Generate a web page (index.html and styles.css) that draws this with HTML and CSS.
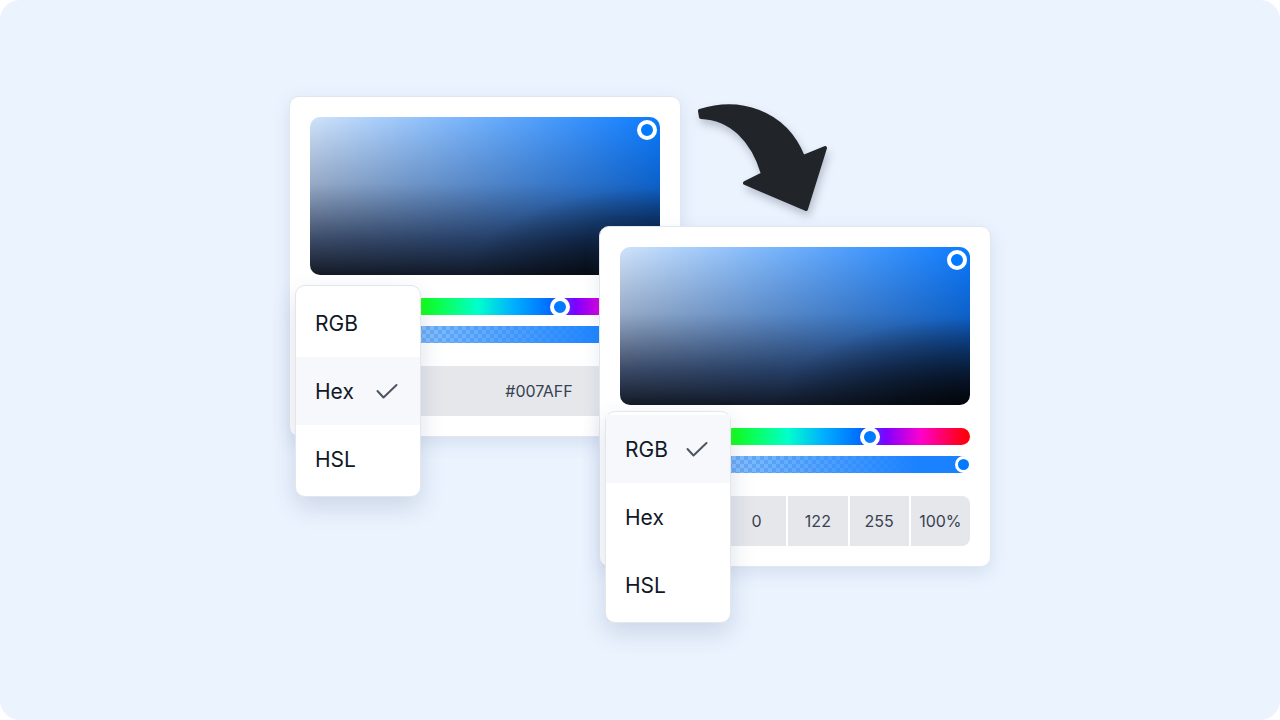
FILE: index.html
```html
<!DOCTYPE html>
<html>
	<head>
		<meta charset="UTF-8">
		<title>Color picker formats</title>
		<link rel="stylesheet" href="styles.css">
	</head>
	<body>
		<div class="canvas">
			<div class="card card-hex">
				<div class="sv"><span class="sv-thumb"></span></div>
				<div class="hue"><span class="hue-thumb"></span></div>
				<div class="alpha"><span class="alpha-thumb"></span></div>
				<div class="fields fields-hex">
					<div class="field format"></div>
					<div class="field">#007AFF</div>
				</div>
				<ul class="menu menu-hex">
					<li>RGB</li>
					<li class="active">Hex
						<svg class="check" width="22" height="22" viewBox="0 0 22 22"><path d="M1.5 10 L7.5 16.5 L20.5 4"/></svg>
					</li>
					<li>HSL</li>
				</ul>
			</div>

			<svg class="arrow" width="150" height="130" viewBox="690 95 150 130">
				<path d="M700 111 C738 99 784 110 803 157 L825 148 L806 209 L745 183 L763 174 C753 140 731 118 701 117 Z"/>
			</svg>

			<div class="card card-rgb">
				<div class="sv"><span class="sv-thumb"></span></div>
				<div class="hue"><span class="hue-thumb"></span></div>
				<div class="alpha"><span class="alpha-thumb"></span></div>
				<div class="fields fields-rgb">
					<div class="field format"></div>
					<div class="field">0</div>
					<div class="field">122</div>
					<div class="field">255</div>
					<div class="field">100%</div>
				</div>
				<ul class="menu menu-rgb">
					<li class="active">RGB
						<svg class="check" width="22" height="22" viewBox="0 0 22 22"><path d="M1.5 10 L7.5 16.5 L20.5 4"/></svg>
					</li>
					<li>Hex</li>
					<li>HSL</li>
				</ul>
			</div>
		</div>
	</body>
</html>
```

FILE: styles.css
```css
html,body{
	margin: 0;
	padding: 0;
	background: #fff;
}
.canvas{
	position: relative;
	width: 1280px;
	height: 720px;
	border-radius: 20px;
	background: #ebf3fe;
	overflow: hidden;
	font-family: Inter, "Liberation Sans", sans-serif;
}
.card{
	position: absolute;
	box-sizing: border-box;
	width: 392px;
	padding: 20px;
	background: #fff;
	border: 1px solid #e2e7ef;
	border-radius: 10px;
	box-shadow: 0 6px 18px rgba(60, 90, 150, .13);
	display: flex;
	flex-direction: column;
}
.card-hex{
	left: 289px;
	top: 96px;
}
.card-rgb{
	left: 599px;
	top: 226px;
}
.sv{
	position: relative;
	height: 158px;
	border-radius: 10px;
	background:
		radial-gradient(ellipse 55% 55% at 100% 100%, rgba(0,0,0,.75), rgba(0,0,0,0)),
		linear-gradient(to bottom, rgba(20,40,80,0) 0%, rgba(20,40,80,.3) 42%, rgba(16,30,60,.78) 78%, rgba(12,18,30,.96) 100%),
		linear-gradient(to right, #d0e3fa, #0a7aff);
}
.sv-thumb{
	position: absolute;
	right: 3px;
	top: 3px;
	width: 20px;
	height: 20px;
	box-sizing: border-box;
	border: 4px solid #fff;
	border-radius: 50%;
	background: #007aff;
}
.hue,.alpha{
	position: relative;
	height: 17px;
	border-radius: 9px;
}
.hue{
	margin-top: 23px;
	background: linear-gradient(to right, #f00 0%, #ff0 15%, #1f2 33%, #0fc 48%, #00b0ff 58%, #0070ff 68%, #8000ff 76%, #f0c 86%, #ff0030 96%, #f00 100%);
}
.alpha{
	margin-top: 11px;
	background:
		linear-gradient(to right, rgba(0,122,255,.2), rgba(0,122,255,.55) 40%, #1a82ff 85%),
		conic-gradient(#cfd8ea 25%, #fff 0 50%, #cfd8ea 0 75%, #fff 0) 0 0 / 8px 8px;
}
.hue-thumb{
	position: absolute;
	left: 240px;
	top: -1.5px;
	width: 20px;
	height: 20px;
	box-sizing: border-box;
	border: 4px solid #fff;
	border-radius: 50%;
	background: #007aff;
}
.alpha-thumb{
	position: absolute;
	left: 335px;
	top: 0;
	width: 17px;
	height: 17px;
	box-sizing: border-box;
	border: 3px solid #fff;
	border-radius: 50%;
	background: #007aff;
}
.fields{
	margin-top: 23px;
	display: grid;
	gap: 2px;
	height: 50px;
	border-radius: 8px;
	overflow: hidden;
}
.fields-hex{
	grid-template-columns: 106px 1fr;
}
.fields-rgb{
	grid-template-columns: 105px repeat(4, 1fr);
}
.field{
	background: #e5e7eb;
	color: #374151;
	font-size: 16px;
	display: flex;
	align-items: center;
	justify-content: center;
}
.menu{
	position: absolute;
	left: 5px;
	width: 126px;
	box-sizing: border-box;
	margin: 0;
	padding: 3px 0;
	list-style: none;
	background: #fff;
	border: 1px solid #e3e6ec;
	border-radius: 10px;
	box-shadow: 0 10px 24px rgba(40, 60, 110, .16);
}
.menu-hex{
	top: 188px;
}
.menu-rgb{
	top: 184px;
}
.menu li{
	height: 68px;
	padding: 0 0 0 19px;
	display: flex;
	align-items: center;
	font-size: 21px;
	color: #111827;
}
.menu li.active{
	background: #f6f8fb;
}
.check{
	position: absolute;
	left: 80px;
	margin-top: 1px;
	fill: none;
	stroke: #4b5563;
	stroke-width: 2;
	stroke-linecap: round;
	stroke-linejoin: round;
}
.arrow{
	position: absolute;
	left: 690px;
	top: 95px;
	overflow: visible;
	filter: drop-shadow(2px 5px 4px rgba(20, 30, 50, .25));
}
.arrow path{
	fill: #212429;
	stroke: #212429;
	stroke-width: 4;
	stroke-linejoin: round;
}
```
